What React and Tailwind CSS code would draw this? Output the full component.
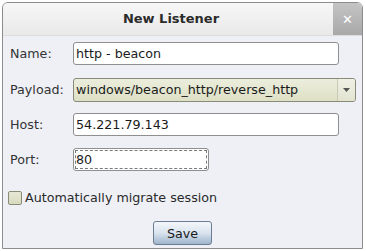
import React from 'react'

function Field({ label, children, className }) {
  return (
    <div className={'flex items-center ' + (className || '')}>
      <div className="w-[63px] shrink-0 text-[12.7px] text-[#333]">{label}</div>
      {children}
    </div>
  )
}

export default function App() {
  return (
    <div className="w-[366px] h-[251px] bg-white pt-[2px] pl-[2px]" style={{ fontFamily: '"DejaVu Sans", sans-serif' }}>
      <div className="w-[361px] h-[247px] border border-[#8c8c8c] rounded-t-[6px] flex flex-col bg-[#eef0f6] overflow-hidden">
        <div className="h-[33px] shrink-0 flex items-stretch bg-gradient-to-b from-[#f7f7f7] to-[#e9e9e9] border-b border-[#dcdcdc]">
          <div className="flex-1 flex items-center justify-center pl-[6px] text-[13px] font-bold text-[#2b2b2b]">
            New Listener
          </div>
          <div className="w-[29px] flex items-center justify-center bg-gradient-to-b from-[#c4c4c4] to-[#a9a9a9] rounded-tr-[5px] text-white text-[13px] font-bold leading-none">
            ✕
          </div>
        </div>

        <div className="flex flex-col pl-[7px] pt-[6px]">
          <Field label="Name:">
            <input
              readOnly
              value="http - beacon"
              className="w-[266px] h-[23px] px-[2px] border border-[#8f8f8f] rounded-[3px] bg-white text-[12.7px] text-[#1a1a1a] outline-none"
            />
          </Field>

          <Field label="Payload:" className="mt-[13px]">
            <div className="w-[283px] h-[24px] flex border border-[#8a8a78] rounded-[3px] bg-gradient-to-b from-[#eceedd] to-[#dde0c4] overflow-hidden">
              <div className="flex-1 flex items-center px-[2px] text-[12.7px] text-[#1a1a1a]">windows/beacon_http/reverse_http</div>
              <div className="w-[18px] flex items-center justify-center border-l border-[#c8cab4] bg-gradient-to-b from-[#f0f1e6] to-[#e2e4d0]">
                <svg width="7" height="4" viewBox="0 0 7 4"><path d="M0 0h7L3.5 4z" fill="#555" /></svg>
              </div>
            </div>
          </Field>

          <Field label="Host:" className="mt-[11px]">
            <input
              readOnly
              value="54.221.79.143"
              className="w-[266px] h-[23px] px-[2px] border border-[#8f8f8f] rounded-[3px] bg-white text-[12.7px] text-[#1a1a1a] outline-none"
            />
          </Field>

          <Field label="Port:" className="mt-[12px]">
            <div className="w-[136px] h-[23px] border border-[#8f8f8f] rounded-[3px] bg-white p-[1px]">
              <div className="h-full border border-dashed border-[#7a7a7a] flex items-center text-[12.7px] text-[#1a1a1a]">80</div>
            </div>
          </Field>

          <div className="flex items-center mt-[17px] -ml-[2px]">
            <div className="w-[14px] h-[14px] border border-[#8a8a78] rounded-[2px] bg-gradient-to-b from-[#e6e8d4] to-[#d8dbbf]" />
            <span className="ml-[3px] text-[12.7px] text-[#2a2a2a]">Automatically migrate session</span>
          </div>

          <div className="flex mt-[14px] pl-[143px]">
            <div className="w-[59px] h-[24px] flex items-center justify-center border border-[#6b7d93] rounded-[3px] bg-gradient-to-b from-[#f4f7fa] via-[#d9e3ee] to-[#9fb5cc] text-[12.7px] text-[#1a1a1a]">
              Save
            </div>
          </div>
        </div>
      </div>
    </div>
  )
}
